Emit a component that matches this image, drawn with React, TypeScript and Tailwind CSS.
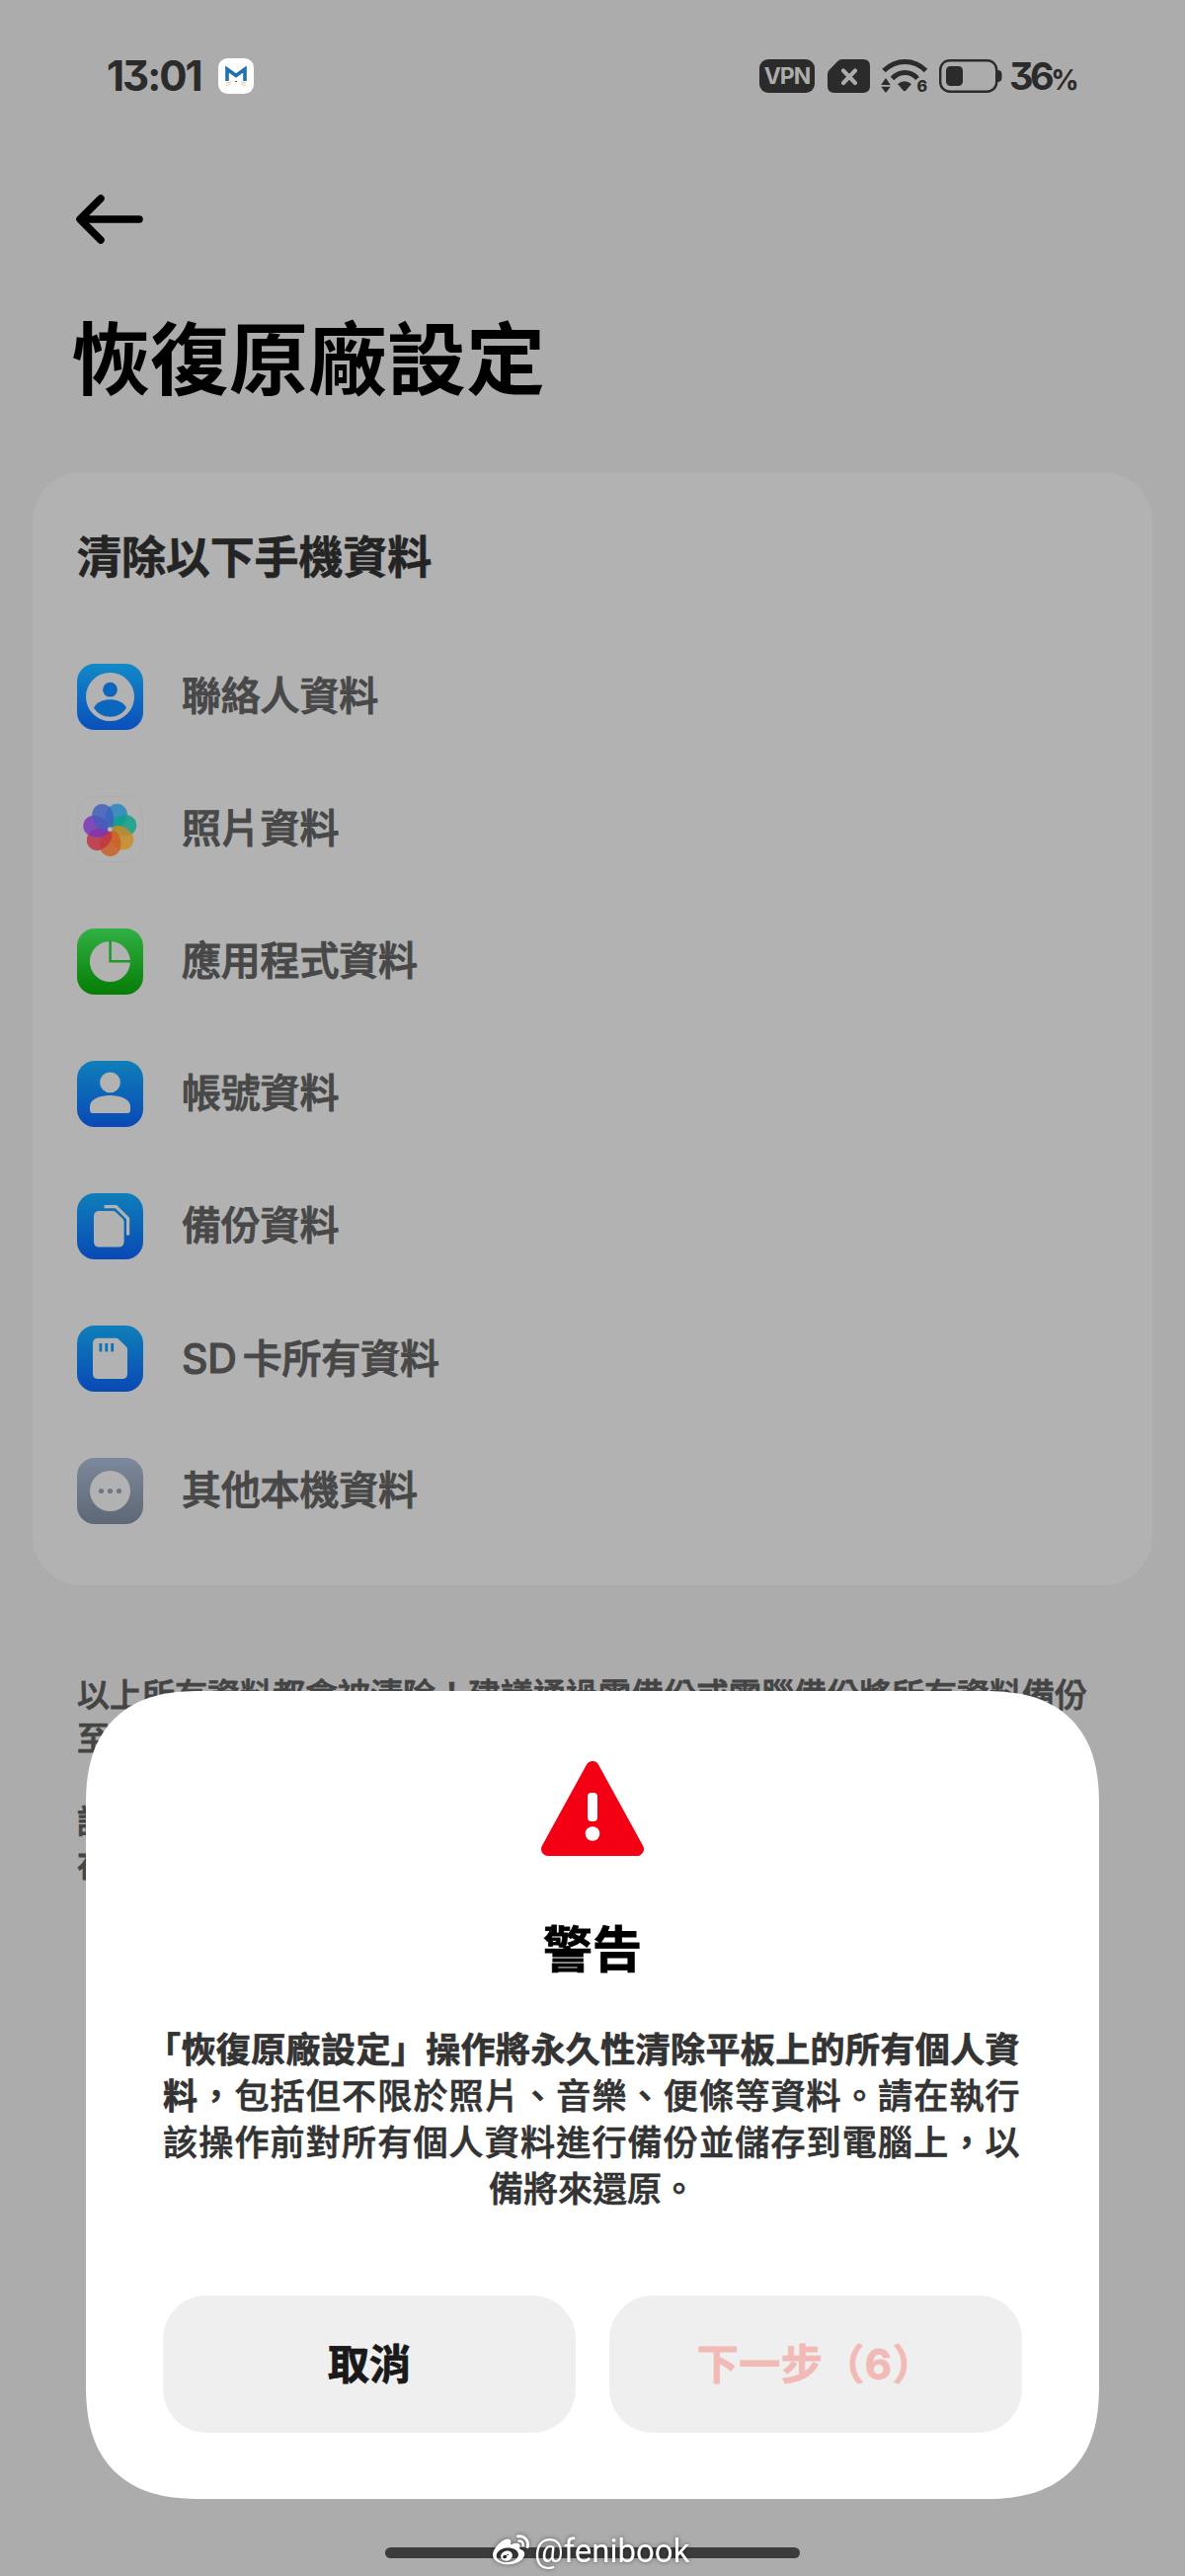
import type { ReactNode } from "react";
import { FaWeibo } from "react-icons/fa";

const petals = [
  { angle: -64, color: "#2487c0" },
  { angle: -13, color: "#0fa088" },
  { angle: 38, color: "#c98b25" },
  { angle: 90, color: "#cb5e24" },
  { angle: 141, color: "#bf3244" },
  { angle: 193, color: "#7a35b8" },
  { angle: 244, color: "#3f5fbd" },
];

const Gradient = ({ id, from, to }: { id: string; from: string; to: string }) => (
  <>
    <defs>
      <linearGradient id={id} x1="0" y1="0" x2="0" y2="1">
        <stop offset="0" stopColor={from} />
        <stop offset="1" stopColor={to} />
      </linearGradient>
    </defs>
    <rect width="67" height="67" rx="18" fill={`url(#${id})`} />
  </>
);

const ItemIcon = ({ children }: { children: ReactNode }) => (
  <svg viewBox="0 0 67 67" className="size-[67px] shrink-0" fill="#b2b2b2">
    {children}
  </svg>
);

const ContactsIcon = () => (
  <ItemIcon>
    <Gradient id="contacts" from="#1289c8" to="#0a4fbb" />
    <circle cx="33.5" cy="33.5" r="24.5" />
    <g fill="#0b66bd">
      <circle cx="33.5" cy="26.2" r="7.4" />
      <path d="M17 44.6C20 38.6 27 36.2 33.5 36.2S47 38.6 50 44.6C46 51 40 53.8 33.5 53.8S21 51 17 44.6Z" />
    </g>
  </ItemIcon>
);

const PhotosIcon = () => (
  <ItemIcon>
    <rect x=".5" y=".5" width="66" height="66" rx="18" stroke="#adadad" />
    <g transform="translate(33.3 33.7)">
      {petals.map((petal) => (
        <path
          key={petal.angle}
          transform={`rotate(${petal.angle - 90})`}
          fill={petal.color}
          fillOpacity=".84"
          d="M-2 1C7-2 12.5 9 10.8 17A10.4 10.4 0 0 1-10.2 17C-10.5 10-7 4-2 1Z"
        />
      ))}
      <circle r="2.4" fill="#b8b8b8" />
    </g>
  </ItemIcon>
);

const AppsIcon = () => (
  <ItemIcon>
    <Gradient id="apps" from="#32b044" to="#057d05" />
    <circle cx="33.4" cy="33.5" r="20.5" />
    <path d="M33.6 12V33.3H55" fill="none" stroke="#1c9a26" strokeWidth="2.5" />
  </ItemIcon>
);

const AccountIcon = () => (
  <ItemIcon>
    <Gradient id="account" from="#0f7fb9" to="#0949b5" />
    <circle cx="33.5" cy="21.8" r="10.4" />
    <path d="M13 46.5C13 38.5 24 35 33.5 35S54 38.5 54 46.5V50Q54 53 51 53H16Q13 53 13 50Z" />
  </ItemIcon>
);

const BackupIcon = () => (
  <ItemIcon>
    <Gradient id="backup" from="#0f7fb9" to="#0949b5" />
    <path d="M22.5 18H36Q38 18 39.5 19.4L46 25.5Q47.6 27 47.6 29V49Q47.6 54.6 42 54.6H22.5Q17 54.6 17 49V23.5Q17 18 22.5 18Z" />
    <path d="M27.6 13.6H39.5L51.6 25.6V42.6" fill="none" stroke="#b2b2b2" strokeWidth="3.2" strokeLinejoin="round" />
  </ItemIcon>
);

const SdCardIcon = () => (
  <ItemIcon>
    <Gradient id="sd" from="#0f7fb9" to="#0949b5" />
    <path d="M21.5 12.7H39.5Q41 12.7 42.2 13.9L50 21.5Q51 22.5 51 24V48.5Q51 54 45.5 54H21.5Q16 54 16 48.5V18.2Q16 12.7 21.5 12.7Z" />
    <path d="M23.9 18V26.5M29.8 18V26.5M35.7 18V26.5" stroke="#0c72b8" strokeWidth="2.8" />
  </ItemIcon>
);

const OtherIcon = () => (
  <ItemIcon>
    <Gradient id="other" from="#7d899c" to="#5c6874" />
    <circle cx="33.5" cy="33.5" r="20.5" />
    <g fill="#6c7886">
      <circle cx="24.5" cy="33.5" r="2.6" />
      <circle cx="33.5" cy="33.5" r="2.6" />
      <circle cx="42.5" cy="33.5" r="2.6" />
    </g>
  </ItemIcon>
);

const items: { icon: ReactNode; label: ReactNode }[] = [
  { icon: <ContactsIcon />, label: "聯絡人資料" },
  { icon: <PhotosIcon />, label: "照片資料" },
  { icon: <AppsIcon />, label: "應用程式資料" },
  { icon: <AccountIcon />, label: "帳號資料" },
  { icon: <BackupIcon />, label: "備份資料" },
  {
    icon: <SdCardIcon />,
    label: (
      <>
        <span className="mr-[6px] text-[41px]">SD</span>卡所有資料
      </>
    ),
  },
  { icon: <OtherIcon />, label: "其他本機資料" },
];

const StatusBar = () => (
  <header className="flex h-[154px] items-center justify-between pl-[108px] pr-[107px] text-[#2b2b2b] [font-feature-settings:'cv09']">
    <div className="flex items-center gap-4">
      <span className="w-[97px] whitespace-nowrap text-[42px] leading-none font-bold tracking-[-2px]">13:01</span>
      <svg viewBox="0 0 36 36" className="size-9">
        <rect width="36" height="36" rx="9.5" fill="#fff" />
        <path d="M9 23V11L18 17.5L27 11V23" fill="none" stroke="#1f72ae" strokeWidth="3.6" />
        <path d="M8 25l5-1M8.5 27.5l4-1.5M28 25l-5-1M27.5 27.5l-4-1.5" stroke="#e3b368" strokeWidth=".8" />
        <path d="M17 23.5h2" stroke="#555" strokeWidth="1" />
      </svg>
    </div>
    <div className="flex items-center">
      <div className="flex h-[34px] w-14 items-center justify-center rounded-[9px] bg-[#2b2b2b] text-[23px] font-bold tracking-[-1px] text-[#acacac]">
        VPN
      </div>
      <svg viewBox="0 0 43 34" className="ml-[13px] h-[34px] w-[43px]">
        <path d="M15 0H36Q43 0 43 7V27Q43 34 36 34H7Q0 34 0 27V15.5Q0 12.5 2 10.5L10 2.3Q12 0 15 0Z" fill="#2b2b2b" />
        <path d="M16 11.5L28 24M28 11.5L16 24" stroke="#acacac" strokeWidth="4.2" strokeLinecap="round" />
      </svg>
      <svg viewBox="0 0 48 36" className="ml-[11px] h-9 w-12 overflow-visible">
        <g fill="none" stroke="#2b2b2b" strokeWidth="5">
          <path d="M3 12.5Q12.5 3.5 24.5 3.5T45.5 12.5" />
          <path d="M11.5 20.5Q17 14.5 24.5 14.5T37 20.5" />
        </g>
        <path d="M17 26Q24 20.5 31 26L25.5 32.5Q24 34 22.5 32.5Z" fill="#2b2b2b" />
        <path d="M5 20L9.8 27H.2ZM5 35L9.8 28.8H.2Z" fill="#2b2b2b" />
        <text x="36.5" y="34" fontSize="16" fontWeight="800" fill="#2b2b2b">6</text>
      </svg>
      <svg viewBox="0 0 64 34" className="ml-[11px] h-[34px] w-16">
        <rect x="1.2" y="1.2" width="57" height="31.5" rx="9.5" fill="none" stroke="#2b2b2b" strokeWidth="2.4" />
        <rect x="7" y="7" width="17" height="20" rx="4.5" fill="#2b2b2b" />
        <path d="M59 11Q63.5 11 63.5 15V19Q63.5 23 59 23Z" fill="#2b2b2b" />
      </svg>
      <span className="ml-[7px] w-[71px] whitespace-nowrap text-[38px] leading-none font-bold tracking-[-3.5px]">
        36<span className="text-[28px]">%</span>
      </span>
    </div>
  </header>
);

const WarningDialog = () => (
  <section className="absolute top-[1712px] left-[87px] flex h-[818px] w-[1026px] flex-col items-center rounded-[116px] bg-white px-[78px] pt-[71px] [corner-shape:superellipse(1.3)]">
    <svg viewBox="0 0 104 96" className="h-24 w-[104px] shrink-0">
      <path d="M52 7L97 89H7Z" fill="#f30014" stroke="#f30014" strokeWidth="14" strokeLinejoin="round" />
      <rect x="47" y="32" width="10" height="29" rx="4" fill="#fff" />
      <circle cx="52" cy="73.5" r="7.3" fill="#fff" />
    </svg>
    <h2 className="mt-[65px] text-[50px] leading-[60px] font-bold text-black [-webkit-text-stroke:0.8px]">警告</h2>
    <div className="mt-[48px] w-full text-[35px] leading-[47px] font-medium whitespace-nowrap text-[#333] [-webkit-text-stroke:0.7px]">
      <p className="ml-[-17px] font-bold tracking-[0.4px]">「恢復原廠設定」操作將永久性清除平板上的所有個人資</p>
      <p className="tracking-[1.2px]">
        <span className="font-bold">料</span>，包括但不限於照片、音樂、便條等資料。請在執行
      </p>
      <p className="tracking-[1.2px]">該操作前對所有個人資料進行備份並儲存到電腦上，以</p>
      <p className="text-center">備將來還原。</p>
    </div>
    <div className="mt-[84px] flex w-full gap-[34px] text-[42px] font-bold [-webkit-text-stroke:0.8px]">
      <button className="h-[139px] flex-1 rounded-[44px] bg-[#efefef] text-[#191919]">取消</button>
      <button className="h-[139px] flex-1 rounded-[44px] bg-[#efefef] tracking-[0.5px] text-[#f2bab6]">下一步（6）</button>
    </div>
  </section>
);

const App = () => {
  return (
    <main
      lang="zh-Hant"
      className="relative h-[2608px] w-[1200px] overflow-hidden bg-[#acacac] font-['Inter','Noto_Sans_CJK_TC',sans-serif]"
    >
      <StatusBar />
      <svg viewBox="0 0 68 50" className="mt-[43px] ml-[77px] h-[50px] w-[68px]" fill="none" stroke="#000" strokeWidth="7.5" strokeLinecap="round" strokeLinejoin="round">
        <path d="M25 4L4 25L25 46M5 25H64" />
      </svg>
      <h1 className="mt-[67px] ml-[72px] text-[80px] leading-[100px] font-bold text-black">恢復原廠設定</h1>
      <section className="mx-[33px] mt-[64px] h-[1127px] rounded-[50px] bg-[#b2b2b2] px-[45px] pt-[57px]">
        <h2 className="text-[45px] leading-[60px] font-bold tracking-[-0.1px] text-[#242424] [-webkit-text-stroke:0.6px]">清除以下手機資料</h2>
        <ul className="mt-[43px]">
          {items.map((item, index) => (
            <li key={index} className="flex h-[134px] items-center gap-[39px]">
              {item.icon}
              <span className="text-[40px] leading-[60px] font-medium tracking-[-0.2px] whitespace-nowrap text-[#484848] [-webkit-text-stroke:1px]">
                {item.label}
              </span>
            </li>
          ))}
        </ul>
      </section>
      <div className="mt-[89px] ml-[78px] flex flex-col gap-[40px] text-[33px] leading-[44px] font-medium whitespace-nowrap text-[#444] [-webkit-text-stroke:0.8px]">
        <p>
          以上所有資料都會被清除！建議通過雲備份或電腦備份將所有資料備份
          <br />至
        </p>
        <p>
          請
          <br />在
        </p>
      </div>

      <WarningDialog />

      {/* gesture bar with the watermark over it */}
      <div className="absolute top-[2579px] left-[390px] h-[11px] w-[420px] rounded-full bg-[#3c3c3c]" />
      <div className="absolute top-[2562px] left-[499px] flex h-10 items-center gap-[5px] text-white drop-shadow-[0_0_2px_rgba(0,0,0,0.5)]">
        <FaWeibo size={37} />
        <span className="font-['Roboto',sans-serif] text-[33px] leading-none">@fenibook</span>
      </div>
    </main>
  );
};

export default App;
